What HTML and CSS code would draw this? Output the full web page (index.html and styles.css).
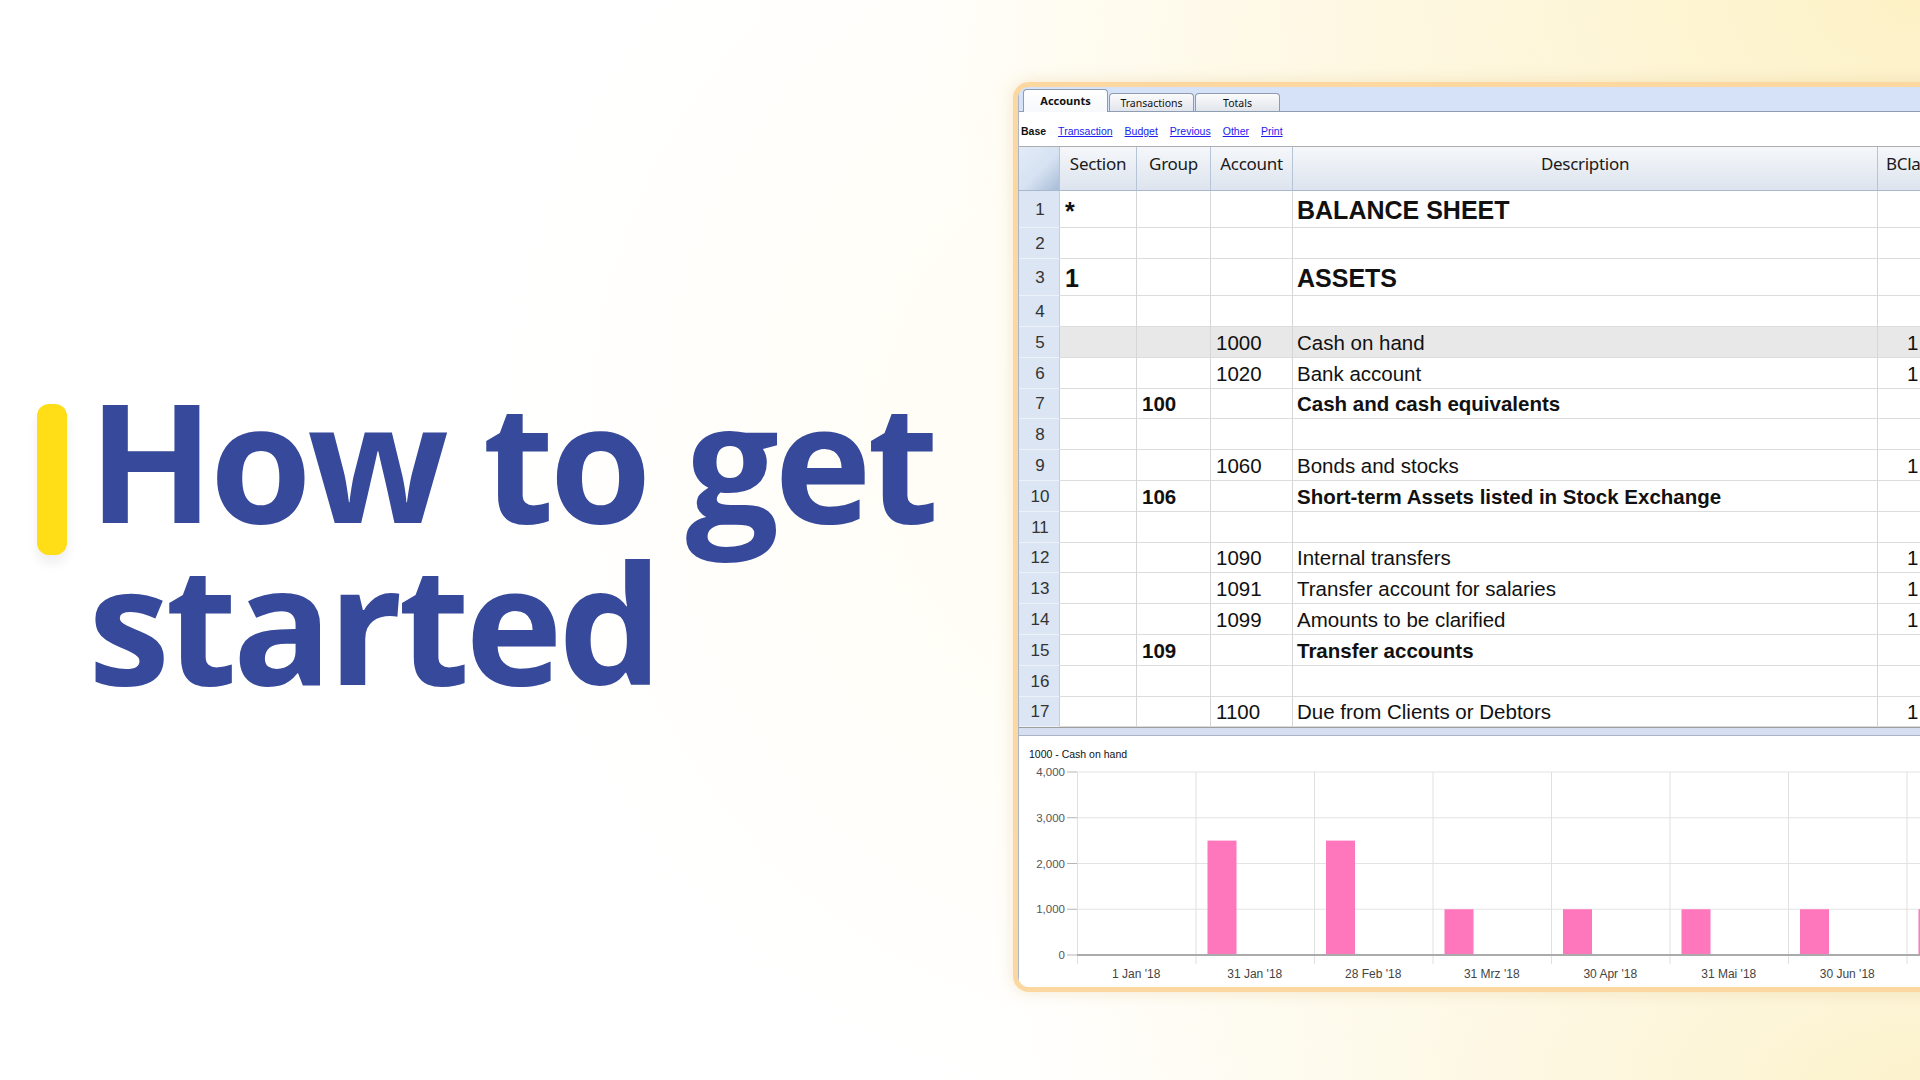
FILE: index.html
```html
<!DOCTYPE html>
<html>
<head>
<meta charset="utf-8">
<title>How to get started</title>
<link rel="stylesheet" href="styles.css">
</head>
<body>
<div class="page">
  <section class="hero">
    <div class="accent"></div>
    <h1 class="title">How to get<br>started</h1>
  </section>

  <div class="frame">
    <div class="window">
      <div class="tabs">
        <div class="tab active">Accounts</div>
        <div class="tab">Transactions</div>
        <div class="tab">Totals</div>
      </div>
      <div class="toolbar">
        <span class="base">Base</span>
        <a class="link">Transaction</a>
        <a class="link">Budget</a>
        <a class="link">Previous</a>
        <a class="link">Other</a>
        <a class="link">Print</a>
      </div>

      <div class="grid">
        <div class="hrow">
          <div class="h hn"></div>
          <div class="h">Section</div>
          <div class="h">Group</div>
          <div class="h">Account</div>
          <div class="h">Description</div>
          <div class="h hbc">BCla</div>
        </div>

        <div class="row tall"><div class="c rn">1</div><div class="c big star">*</div><div class="c"></div><div class="c"></div><div class="c desc big">BALANCE SHEET</div><div class="c bc"></div></div>
        <div class="row mid"><div class="c rn">2</div><div class="c"></div><div class="c"></div><div class="c"></div><div class="c desc"></div><div class="c bc"></div></div>
        <div class="row tall"><div class="c rn">3</div><div class="c big">1</div><div class="c"></div><div class="c"></div><div class="c desc big">ASSETS</div><div class="c bc"></div></div>
        <div class="row mid"><div class="c rn">4</div><div class="c"></div><div class="c"></div><div class="c"></div><div class="c desc"></div><div class="c bc"></div></div>
        <div class="row sel"><div class="c rn">5</div><div class="c"></div><div class="c"></div><div class="c">1000</div><div class="c desc">Cash on hand</div><div class="c bc">1</div></div>
        <div class="row"><div class="c rn">6</div><div class="c"></div><div class="c"></div><div class="c">1020</div><div class="c desc">Bank account</div><div class="c bc">1</div></div>
        <div class="row"><div class="c rn">7</div><div class="c"></div><div class="c b">100</div><div class="c"></div><div class="c desc b">Cash and cash equivalents</div><div class="c bc"></div></div>
        <div class="row"><div class="c rn">8</div><div class="c"></div><div class="c"></div><div class="c"></div><div class="c desc"></div><div class="c bc"></div></div>
        <div class="row"><div class="c rn">9</div><div class="c"></div><div class="c"></div><div class="c">1060</div><div class="c desc">Bonds and stocks</div><div class="c bc">1</div></div>
        <div class="row"><div class="c rn">10</div><div class="c"></div><div class="c b">106</div><div class="c"></div><div class="c desc b">Short-term Assets listed in Stock Exchange</div><div class="c bc"></div></div>
        <div class="row"><div class="c rn">11</div><div class="c"></div><div class="c"></div><div class="c"></div><div class="c desc"></div><div class="c bc"></div></div>
        <div class="row"><div class="c rn">12</div><div class="c"></div><div class="c"></div><div class="c">1090</div><div class="c desc">Internal transfers</div><div class="c bc">1</div></div>
        <div class="row"><div class="c rn">13</div><div class="c"></div><div class="c"></div><div class="c">1091</div><div class="c desc">Transfer account for salaries</div><div class="c bc">1</div></div>
        <div class="row"><div class="c rn">14</div><div class="c"></div><div class="c"></div><div class="c">1099</div><div class="c desc">Amounts to be clarified</div><div class="c bc">1</div></div>
        <div class="row"><div class="c rn">15</div><div class="c"></div><div class="c b">109</div><div class="c"></div><div class="c desc b">Transfer accounts</div><div class="c bc"></div></div>
        <div class="row"><div class="c rn">16</div><div class="c"></div><div class="c"></div><div class="c"></div><div class="c desc"></div><div class="c bc"></div></div>
        <div class="row"><div class="c rn">17</div><div class="c"></div><div class="c"></div><div class="c">1100</div><div class="c desc">Due from Clients or Debtors</div><div class="c bc">1</div></div>
      </div>

      <div class="splitter"></div>

      <div class="chart">
        <svg class="chart-svg" width="948" height="250" viewBox="0 0 948 250">
          <text class="ct" x="10" y="22">1000 - Cash on hand</text>
          <g class="hgrid">
            <line x1="58" y1="36" x2="948" y2="36"/>
            <line x1="58" y1="81.75" x2="948" y2="81.75"/>
            <line x1="58" y1="127.5" x2="948" y2="127.5"/>
            <line x1="58" y1="173.25" x2="948" y2="173.25"/>
          </g>
          <g class="ticks">
            <line x1="48" y1="36" x2="58" y2="36"/>
            <line x1="48" y1="81.75" x2="58" y2="81.75"/>
            <line x1="48" y1="127.5" x2="58" y2="127.5"/>
            <line x1="48" y1="173.25" x2="58" y2="173.25"/>
            <line x1="48" y1="219" x2="58" y2="219"/>
          </g>
          <g class="vgrid">
            <line x1="58.5" y1="36" x2="58.5" y2="228"/>
            <line x1="177" y1="36" x2="177" y2="228"/>
            <line x1="295.5" y1="36" x2="295.5" y2="228"/>
            <line x1="414" y1="36" x2="414" y2="228"/>
            <line x1="532.5" y1="36" x2="532.5" y2="228"/>
            <line x1="651" y1="36" x2="651" y2="228"/>
            <line x1="769.5" y1="36" x2="769.5" y2="228"/>
            <line x1="888" y1="36" x2="888" y2="228"/>
          </g>
          <g class="bars">
            <rect x="188.5" y="104.6" width="29" height="114.4"/>
            <rect x="307" y="104.6" width="29" height="114.4"/>
            <rect x="425.5" y="173.25" width="29" height="45.75"/>
            <rect x="544" y="173.25" width="29" height="45.75"/>
            <rect x="662.5" y="173.25" width="29" height="45.75"/>
            <rect x="781" y="173.25" width="29" height="45.75"/>
            <rect x="899.5" y="173.25" width="29" height="45.75"/>
          </g>
          <line class="axis" x1="58" y1="219" x2="948" y2="219"/>
          <g class="ylab">
            <text x="46" y="40">4,000</text>
            <text x="46" y="85.75">3,000</text>
            <text x="46" y="131.5">2,000</text>
            <text x="46" y="177.25">1,000</text>
            <text x="46" y="223">0</text>
          </g>
          <g class="xlab">
            <text x="117.25" y="242">1 Jan '18</text>
            <text x="235.75" y="242">31 Jan '18</text>
            <text x="354.25" y="242">28 Feb '18</text>
            <text x="472.75" y="242">31 Mrz '18</text>
            <text x="591.25" y="242">30 Apr '18</text>
            <text x="709.75" y="242">31 Mai '18</text>
            <text x="828.25" y="242">30 Jun '18</text>
          </g>
        </svg>
      </div>
    </div>
  </div>
</div>
</body>
</html>
```

FILE: styles.css
```css
html, body {
  margin: 0;
  padding: 0;
}

body {
  width: 1920px;
  height: 1080px;
  overflow: hidden;
  font-family: "Liberation Sans", Arial, sans-serif;
  background:
    radial-gradient(ellipse 1000px 650px at 100% 0%, #fdf1c5 0%, rgba(253, 241, 197, 0.55) 45%, rgba(255, 255, 255, 0) 100%),
    radial-gradient(ellipse 900px 420px at 100% 100%, #fcf2cc 0%, rgba(252, 242, 204, 0) 100%),
    radial-gradient(ellipse 700px 700px at 62% 40%, #fffcf0 0%, rgba(255, 252, 240, 0) 100%),
    #ffffff;
}

.page {
  display: flex;
  height: 1080px;
}

/* ---------- hero ---------- */
.hero {
  width: 1013px;
  flex-shrink: 0;
  box-sizing: border-box;
  padding: 378px 0 0 37px;
  display: flex;
  align-items: flex-start;
  gap: 21px;
}

.accent {
  flex-shrink: 0;
  width: 30px;
  height: 151px;
  margin-top: 26px;
  border-radius: 12px;
  background: #ffde17;
  box-shadow: 0 8px 12px rgba(0, 0, 0, 0.07);
}

.title {
  margin: 0;
  font-family: "Open Sans", "Noto Sans", sans-serif;
  font-weight: 700;
  font-size: 165px;
  line-height: 162px;
  letter-spacing: -4.5px;
  color: #36499a;
  white-space: nowrap;
}

/* ---------- app frame ---------- */
.frame {
  flex-shrink: 0;
  margin-top: 82px;
  width: 960px;
  height: 910px;
  box-sizing: border-box;
  border: 5px solid #fcd7a0;
  border-radius: 16px;
  overflow: hidden;
  background: #d6e2f7;
  box-shadow: 0 0 16px rgba(220, 190, 130, 0.35);
}

.window {
  height: 100%;
  border-left: 1px solid #a9b6c8;
  display: flex;
  flex-direction: column;
}

.tabs {
  height: 24px;
  flex-shrink: 0;
  border-bottom: 1px solid #8f9db2;
  display: flex;
  align-items: flex-end;
  padding-left: 4px;
}

.tab {
  width: 85px;
  height: 18px;
  box-sizing: border-box;
  margin-right: 1px;
  border: 1px solid #8e9aae;
  border-bottom: none;
  border-radius: 4px 4px 0 0;
  background: linear-gradient(#fbfbfc, #e1e5ec);
  font-family: "Noto Sans", sans-serif;
  font-size: 10.5px;
  color: #111;
  display: flex;
  align-items: center;
  justify-content: center;
}

.tab.active {
  height: 23px;
  margin-bottom: -1px;
  background: linear-gradient(#ffffff, #f6f8fb);
  font-weight: 700;
  font-size: 11px;
  padding-bottom: 2px;
}

.toolbar {
  height: 35px;
  flex-shrink: 0;
  box-sizing: border-box;
  padding: 3px 0 0 2px;
  background: #ffffff;
  border-bottom: 1px solid #adadad;
  display: flex;
  align-items: center;
  gap: 12px;
  font-size: 10.5px;
}

.base {
  font-weight: 700;
  color: #111;
}

.link {
  color: #1c1cef;
  text-decoration: underline;
}

/* ---------- table ---------- */
.grid {
  flex-shrink: 0;
  background: #ffffff;
  border-bottom: 1px solid #9e9e9e;
}

.hrow,
.row {
  display: grid;
  grid-template-columns: 41px 77px 74px 82px 585px 72px;
}

.hrow {
  height: 44px;
}

.h {
  box-sizing: border-box;
  padding-top: 7px;
  border-right: 1px solid #b6c4d7;
  border-bottom: 1px solid #a9b8cc;
  background: linear-gradient(#f5f7fa, #dde4ee);
  font-family: "Noto Sans", sans-serif;
  font-size: 17px;
  line-height: 20px;
  letter-spacing: -0.3px;
  color: #1a1a1a;
  text-align: center;
}

.h.hn {
  background: linear-gradient(135deg, #e3ebf7 0%, #d6e2f2 55%, #a8bcd7 100%);
  border-right-color: #b3c3d8;
}

.h.hbc {
  text-align: left;
  padding-left: 8px;
}

.row {
  height: 30.8px;
}

.row.mid {
  height: 31px;
}

.row.tall {
  height: 37px;
}

.c {
  box-sizing: border-box;
  overflow: hidden;
  white-space: nowrap;
  display: flex;
  align-items: center;
  padding-left: 5px;
  padding-top: 2px;
  border-right: 1px solid #d6d6d6;
  border-bottom: 1px solid #dcdcdc;
  background: #ffffff;
  font-size: 20.5px;
  color: #111;
}

.c.rn {
  justify-content: center;
  padding-left: 2px;
  background: #dbe5f3;
  border-right-color: #c0cfe3;
  border-bottom-color: #edf2f9;
  font-size: 17px;
  color: #333;
}

.row.sel .c:not(.rn) {
  background: #e8e8e8;
}

.c.desc {
  padding-left: 4px;
}

.c.bc {
  padding-left: 29px;
}

.c.b {
  font-weight: 700;
}

.c.big {
  font-size: 25px;
  font-weight: 700;
}

.c.star {
  align-items: flex-start;
  padding-top: 6px;
}

.splitter {
  height: 7px;
  flex-shrink: 0;
  background: #d5dff1;
}

/* ---------- chart ---------- */
.chart {
  flex: 1;
  background: #ffffff;
  border-top: 1px solid #a7b3c6;
}

.chart-svg {
  display: block;
  font-family: "Liberation Sans", Arial, sans-serif;
}

.ct {
  font-size: 10.5px;
  fill: #111;
}

.hgrid line {
  stroke: #e3e3e3;
  stroke-width: 1;
}

.vgrid line {
  stroke: #e0e0e0;
  stroke-width: 1;
}

.ticks line {
  stroke: #b5b5b5;
  stroke-width: 1;
}

.bars rect {
  fill: #fe77bd;
}

.axis {
  stroke: #ababab;
  stroke-width: 2;
}

.ylab text {
  font-size: 11.5px;
  fill: #555;
  text-anchor: end;
}

.xlab text {
  font-size: 12px;
  fill: #444;
  text-anchor: middle;
}
```
